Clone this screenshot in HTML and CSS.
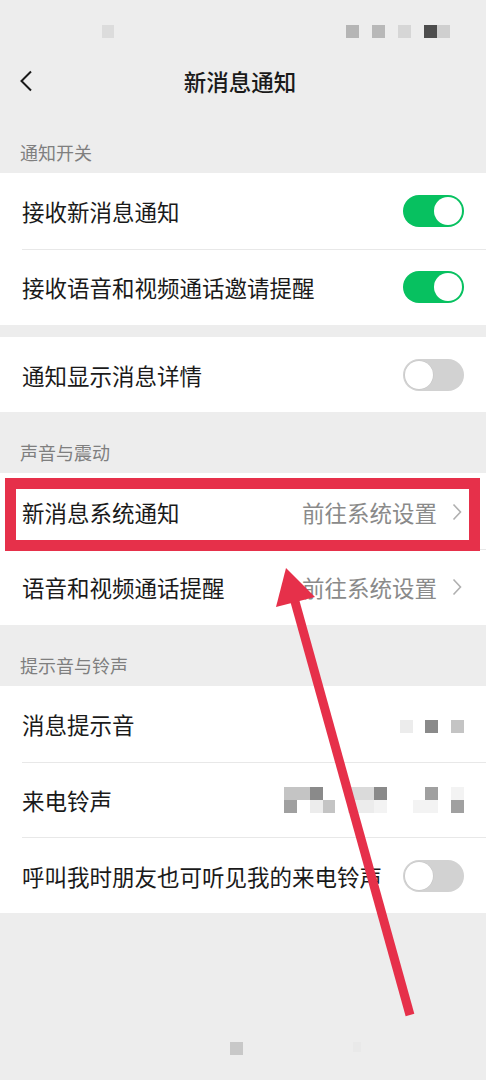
FILE: index.html
```html
<!DOCTYPE html>
<html lang="zh-CN">
<head>
<meta charset="utf-8">
<title>新消息通知</title>
<link rel="stylesheet" href="styles.css">
</head>
<body>
<div class="screen">
  <div class="statusbar">
    <span class="px s1"></span>
    <div class="status-right">
      <span class="px s2"></span>
      <span class="px s3"></span>
      <span class="px s4"></span>
      <span class="px s5 tight"></span>
      <span class="px s6 joined"></span>
    </div>
  </div>

  <div class="header">
    <div class="back">
      <svg width="14" height="22" viewBox="0 0 14 22"><path d="M12 1.5 L2.5 11 L12 20.5" fill="none" stroke="#1a1a1a" stroke-width="2"/></svg>
    </div>
    <div class="title">新消息通知</div>
    <div></div>
  </div>

  <div class="group-label">通知开关</div>
  <div class="group">
    <div class="row"><div class="row-inner"><span class="label">接收新消息通知</span><span class="toggle on"><span class="knob"></span></span></div></div>
    <div class="row"><div class="row-inner sep"><span class="label">接收语音和视频通话邀请提醒</span><span class="toggle on"><span class="knob"></span></span></div></div>
  </div>

  <div class="gap"></div>
  <div class="group">
    <div class="row"><div class="row-inner"><span class="label">通知显示消息详情</span><span class="toggle off"><span class="knob"></span></span></div></div>
  </div>

  <div class="group-label">声音与震动</div>
  <div class="group">
    <div class="row"><div class="row-inner"><span class="label">新消息系统通知</span><span class="value">前往系统设置<svg class="chev" width="10" height="18" viewBox="0 0 10 18"><path d="M1.5 1.5 L8.5 9 L1.5 16.5" fill="none" stroke="#b0b0b0" stroke-width="1.6"/></svg></span></div></div>
    <div class="row"><div class="row-inner sep"><span class="label">语音和视频通话提醒</span><span class="value">前往系统设置<svg class="chev" width="10" height="18" viewBox="0 0 10 18"><path d="M1.5 1.5 L8.5 9 L1.5 16.5" fill="none" stroke="#b0b0b0" stroke-width="1.6"/></svg></span></div></div>
  </div>

  <div class="group-label">提示音与铃声</div>
  <div class="group">
    <div class="row"><div class="row-inner"><span class="label">消息提示音</span>
      <span class="mosaic">
        <i></i><i></i><i></i><i></i><i></i><i></i><i></i><i></i><i></i><i class="m6"></i><i></i><i class="m2"></i><i></i><i class="m4"></i>
      </span></div></div>
    <div class="row"><div class="row-inner sep"><span class="label">来电铃声</span>
      <span class="mosaic two">
        <i class="m4"></i><i class="m4"></i><i class="m2"></i><i></i><i></i><i class="m5"></i><i class="m5"></i><i class="m2"></i><i></i><i></i><i></i><i class="m3"></i><i></i><i class="m7"></i>
        <i class="m3"></i><i></i><i class="m6"></i><i class="m4"></i><i></i><i class="m6"></i><i class="m6"></i><i class="m7"></i><i></i><i></i><i class="m7"></i><i class="m7"></i><i></i><i class="m3"></i>
      </span></div></div>
    <div class="row"><div class="row-inner sep"><span class="label">呼叫我时朋友也可听见我的来电铃声</span><span class="toggle off"><span class="knob"></span></span></div></div>
  </div>

  <div class="spacer"></div>
  <div class="navbar">
    <span class="px n1"></span>
    <span class="px n2"></span>
  </div>

  <div class="highlight"></div>
  <svg class="arrow" width="486" height="1080" viewBox="0 0 486 1080">
    <line x1="410" y1="1015" x2="294" y2="598" stroke="#e6304a" stroke-width="9"/>
    <polygon points="286,568 276,607 315,597" fill="#e6304a"/>
  </svg>
</div>
</body>
</html>
```

FILE: styles.css
```css
* { box-sizing: border-box; }
html, body { margin: 0; padding: 0; }
body {
  background: #ededed;
  font-family: "Noto Sans CJK SC", "Noto Sans", sans-serif;
  color: #1a1a1a;
}
.screen {
  position: relative;
  width: 486px;
  height: 1080px;
  overflow: hidden;
  display: flex;
  flex-direction: column;
  background: #ededed;
}
.statusbar {
  height: 50px;
  flex-shrink: 0;
  padding: 25px 36px 0 102px;
  display: flex;
  align-items: flex-start;
}
.px { display: block; width: 13px; height: 13px; }
.s1 { background: #dcdcdc; width: 12px; }
.status-right { margin-left: auto; display: flex; gap: 13px; }
.status-right .joined { margin-left: -13px; }
.s2 { background: #b5b5b5; }
.s3 { background: #b8b8b8; }
.s4 { background: #d6d6d6; }
.s5 { background: #4d4d4d; }
.s6 { background: #cfcfcf; }

.header {
  height: 62px;
  flex-shrink: 0;
  display: grid;
  grid-template-columns: 60px 1fr 60px;
  align-items: center;
}
.back { padding-left: 19px; display: flex; align-items: center; }
.title {
  text-align: center;
  font-size: 22.5px;
  font-weight: 500;
  color: #1a1a1a;
  padding-right: 6px;
}
.group-label {
  flex-shrink: 0;
  padding: 28px 20px 8px;
  font-size: 18px;
  line-height: 25px;
  color: #7f7f7f;
}
.gap { height: 12px; flex-shrink: 0; }
.group { background: #fff; flex-shrink: 0; }
.row { padding-left: 22px; }
.row-inner {
  height: 75.75px;
  padding-right: 22px;
  padding-top: 1px;
  display: flex;
  align-items: center;
  justify-content: space-between;
}
.row-inner.sep { border-top: 1px solid #e8e8e8; padding-top: 0; }
.label { font-size: 22.5px; color: #1a1a1a; white-space: nowrap; }
.value {
  display: flex;
  align-items: center;
  gap: 15px;
  font-size: 22.5px;
  color: #8a8a8a;
  padding-right: 2px;
}
.toggle {
  position: relative;
  width: 61px;
  height: 32px;
  border-radius: 16px;
  flex-shrink: 0;
}
.toggle.on { background: #07c160; }
.toggle.off { background: #d2d2d2; }
.knob {
  position: absolute;
  top: 2px;
  width: 28px;
  height: 28px;
  border-radius: 50%;
  background: #fff;
}
.toggle.on .knob { right: 2px; }
.toggle.off .knob { left: 2px; box-shadow: 0 0 0 0.5px #c4c4c4; }

.mosaic {
  display: grid;
  grid-template-columns: repeat(14, 12.86px);
  grid-auto-rows: 13px;
  margin-top: 4px;
}
.mosaic.two { margin-top: 0; }
.mosaic i { display: block; }
.m2 { background: #8a8a8a; }
.m3 { background: #a0a0a0; }
.m4 { background: #c4c4c4; }
.m5 { background: #dadada; }
.m6 { background: #ececec; }
.m7 { background: #f3f3f3; }

.spacer { flex: 1; }
.navbar {
  height: 38px;
  flex-shrink: 0;
  padding-left: 230px;
  display: flex;
  align-items: flex-start;
}
.n1 { background: #c8c8c8; }
.n2 { background: #e6e6e6; margin-left: 110px; width: 8px; height: 10px; opacity: 0.6; }

.highlight {
  position: absolute;
  left: 5px;
  top: 478px;
  width: 475px;
  height: 73px;
  border: 11px solid #e6304a;
  pointer-events: none;
}
.arrow {
  position: absolute;
  left: 0;
  top: 0;
  pointer-events: none;
}
```
